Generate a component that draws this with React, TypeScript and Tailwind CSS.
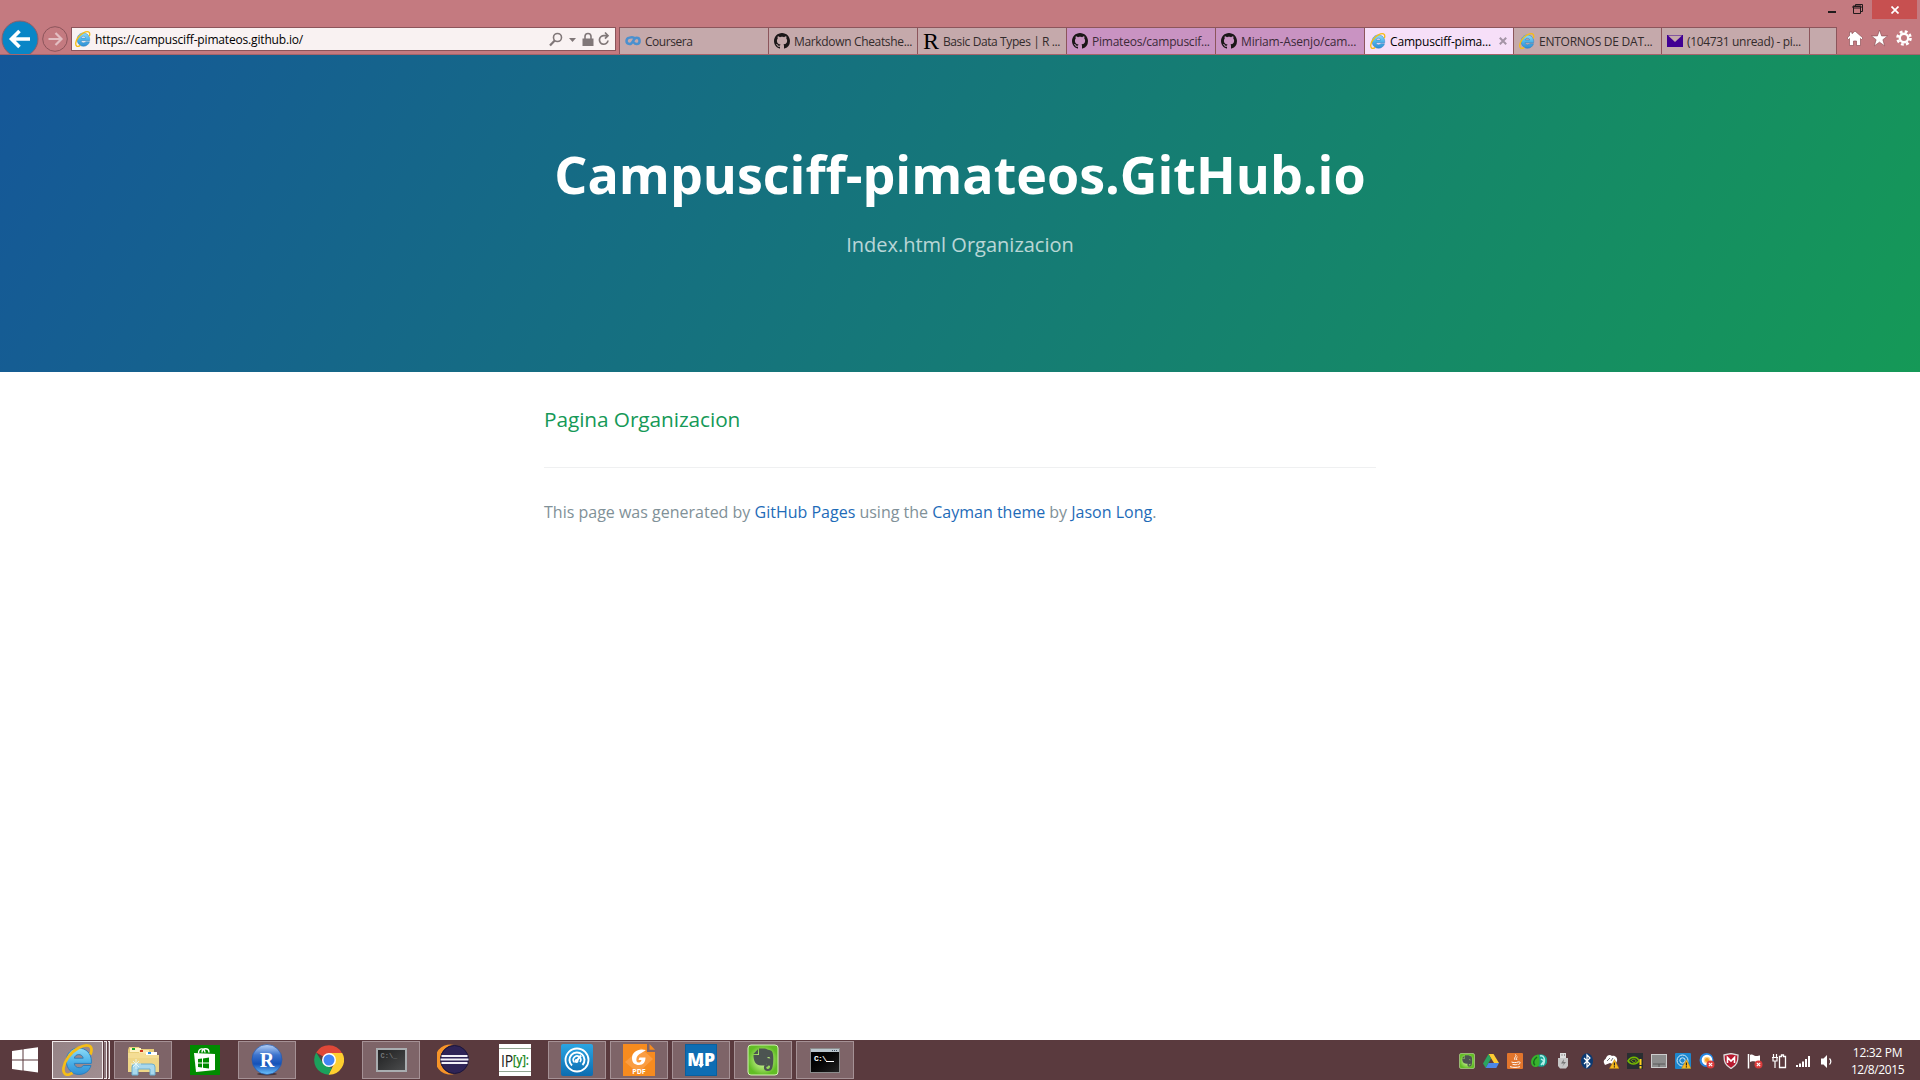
import React from "react";

type P = { className?: string };

function IE({ className = "w-4 h-4" }: P) {
  return (
    <svg viewBox="0 0 32 32" className={className}>
      <defs>
        <linearGradient id="ieb" x1="0" y1="0" x2="0" y2="1">
          <stop offset="0" stopColor="#8fdcf8" />
          <stop offset="0.5" stopColor="#4fb4ea" />
          <stop offset="1" stopColor="#2f8fd4" />
        </linearGradient>
      </defs>
      <path
        d="M16.500 4C9.400 4 4.300 9.700 4.300 17S9.600 30.500 16.800 30.500c5.800 0 10.500-3.200 12.200-9h-7.800c-.9 1.500-2.100 2.200-4 2.200-2.700 0-4.600-1.500-4.900-4.300h17c.1-.7.1-1.600.1-2.300C29.400 9.500 24 4 16.500 4zM12.300 14.200c.6-2.300 2.200-3.600 4.500-3.600s4 1.300 4.400 3.600z"
        fill="url(#ieb)"
        stroke="#2c7fbd"
        strokeWidth="1"
      />
      <path
        d="M28.500 10.500c1.500-4 1.300-7.500-1.500-8.700C22 0 12 5 6 13.500 1 20.500 0 28 3.500 30.300c1.800 1 4.500.2 7-1.500"
        fill="none"
        stroke="#f5bd17"
        strokeWidth="2.700"
      />
    </svg>
  );
}

function GitHub() {
  return (
    <svg viewBox="0 0 16 16" className="h-4 w-4">
      <path
        fill="#1b1718"
        d="M8 0C3.580 0 0 3.580 0 8c0 3.540 2.290 6.530 5.470 7.590.4.070.55-.17.55-.38 0-.19-.01-.82-.01-1.490-2.010.37-2.530-.49-2.690-.94-.09-.23-.48-.94-.82-1.130-.28-.15-.68-.52-.01-.53.63-.01 1.080.58 1.230.82.72 1.210 1.870.87 2.330.66.070-.52.28-.87.51-1.070-1.780-.2-3.640-.89-3.640-3.950 0-.87.31-1.590.82-2.150-.08-.2-.36-1.020.08-2.120 0 0 .67-.21 2.200.82.64-.18 1.320-.27 2-.27s1.360.09 2 .27c1.530-1.040 2.200-.82 2.200-.82.44 1.100.16 1.920.08 2.120.51.56.82 1.270.82 2.150 0 3.070-1.870 3.750-3.650 3.950.29.25.54.73.54 1.480 0 1.070-.01 1.930-.01 2.200 0 .21.15.46.55.38A8.010 8.010 0 0016 8c0-4.420-3.580-8-8-8z"
      />
    </svg>
  );
}

function Coursera() {
  return (
    <svg viewBox="0 0 16 16" className="h-4 w-4">
      <path
        d="M10 5.400C8.700 4 6.500 4 4.500 4.600 0.500 5.500 0.500 10.500 4.500 11.100 8 11.600 8 4.800 11.600 4.800c4 0 4 6.200 0 6.200-1.500 0-2.300-.8-3.200-2"
        fill="none"
        stroke="#4a90cf"
        strokeWidth="2.500"
      />
    </svg>
  );
}

function Mail() {
  return (
    <svg viewBox="0 0 16 16" className="h-4 w-4">
      <rect x="0" y="2" width="16" height="12" fill="#410093" />
      <path d="M1 2.500h14L8 9z" fill="#c5a9ab" />
    </svg>
  );
}

function RLetter() {
  return (
    <span className="flex h-4 w-4 items-center justify-center font-['Liberation_Serif',serif] text-[24px] leading-none text-black">
      R
    </span>
  );
}

function Evernote({ className = "h-8 w-8" }: P) {
  return (
    <svg viewBox="0 0 32 32" className={className}>
      <defs>
        <radialGradient id="evg">
          <stop offset="0.2" stopColor="#d0f598" />
          <stop offset="1" stopColor="#62bd25" />
        </radialGradient>
      </defs>
      <rect x="1" y="1" width="30" height="30" rx="3" fill="url(#evg)" stroke="#d6f3b8" />
      <path
        d="M12 4.500h5.500c2 0 3 1.300 4.700 1.600 2.600.4 3.300 1.500 3.700 4 .7 4 .5 9-.4 13-.8 3.300-2.300 4-4.600 4-2.800 0-4-1.500-4-3.600 0-2.400 1.500-3.600 4.200-3.400v2.300c-1.300 0-1.900.5-1.800 1.400.1.800.8 1.200 1.800 1.200 1.400 0 2-1 2-3.400-2 .7-3-.6-3.600-1.800-1 1.600-3 2-5.400 1.600C9 21 7 18.500 6.500 12.500V11H12z"
        fill="#4c5451"
      />
      <path d="M6.300 10L11 5.300V10z" fill="#4c5451" />
      <path d="M20 14c1-1.300 2.600-1.200 3.400.4z" fill="#b7ea7c" />
    </svg>
  );
}

function Gauge({ className = "h-8 w-8" }: P) {
  return (
    <svg viewBox="0 0 32 32" className={className}>
      <defs>
        <linearGradient id="gg" x1="0" y1="0" x2="0" y2="1">
          <stop offset="0" stopColor="#2ba5e3" />
          <stop offset="1" stopColor="#0d6cb0" />
        </linearGradient>
      </defs>
      <rect width="32" height="32" rx="2" fill="url(#gg)" />
      <g fill="none" stroke="#fff">
        <circle cx="16" cy="16" r="11.500" strokeWidth="1.800" />
        <path d="M11 21.500A7.500 7.500 0 1 1 21.500 21" strokeWidth="2" />
        <path d="M13.500 18.500A3.700 3.700 0 1 1 19 18" strokeWidth="1.600" />
        <path d="M15.500 17L20 11.500" strokeWidth="2" />
      </g>
      <circle cx="15.500" cy="17" r="2" fill="#fff" />
    </svg>
  );
}

function Explorer() {
  return (
    <svg viewBox="0 0 32 32" className="h-8 w-8">
      <path d="M2 3h10l1 2h14v4h3v19H1V6z" fill="#e8cd78" />
      <path d="M3 4h11v4H3z" fill="#fff3c4" />
      <path d="M12 6h10v4H12z" fill="#fbe9ae" />
      <path d="M19 8h11v4H19z" fill="#fff" />
      <rect x="5" y="4" width="3" height="2" fill="#18a52c" />
      <rect x="13" y="6" width="3" height="2" fill="#d2381c" />
      <rect x="21" y="8" width="3" height="2" fill="#2a8de0" />
      <path d="M1 9h16l2 2h13v17H1z" fill="#f4dd94" />
      <path d="M1 14h31v14H1z" fill="#efd687" />
      <path d="M5 31V23q0-3 3-3h17q3 0 3 3v8h-5v-6H11v6z" fill="#a9d8ec" stroke="#6aaed0" />
      <path d="M9 15v10M4 20h10M6 17l6 6M12 17l-6 6" stroke="#e9fbff" strokeWidth=".8" />
    </svg>
  );
}

function Store() {
  return (
    <svg viewBox="0 0 30 30" className="h-[30px] w-[30px]">
      <rect width="30" height="30" fill="#008a00" />
      <path d="M8.500 8.500c0-6 6-6 6.500-1M12 7.500c0-5 7-5 7 0" fill="none" stroke="#fff" strokeWidth="1.400" />
      <path d="M4 8l21 1v16L6 27z" fill="#fff" />
      <path d="M8 14l4-.5v4H8zm5-.6l6-.8v4.900h-6zM8 18.500h4v4L8 22zm5 0h6v5l-6-.8z" fill="#008a00" />
    </svg>
  );
}

function RStudio() {
  return (
    <div className="relative flex h-8 w-8 items-center justify-center">
      <svg viewBox="0 0 32 32" className="absolute inset-0 h-8 w-8">
        <defs>
          <linearGradient id="rs" x1="0" y1="0" x2="0" y2="1">
            <stop offset="0" stopColor="#b9d3f7" />
            <stop offset="0.35" stopColor="#3c73cd" />
            <stop offset="0.65" stopColor="#1451b8" />
            <stop offset="1" stopColor="#6ec6ff" />
          </linearGradient>
        </defs>
        <ellipse cx="16" cy="30" rx="10" ry="1.500" fill="#46353a" />
        <circle cx="16" cy="15.500" r="15" fill="url(#rs)" stroke="#2459ae" strokeWidth=".7" />
      </svg>
      <span className="relative font-['Liberation_Serif',serif] text-[20px] leading-none font-bold text-white">R</span>
    </div>
  );
}

function Chrome() {
  return (
    <svg viewBox="0 0 30 30" className="h-[30px] w-[30px]">
      <path d="M15 15L2.200 7.500A14.700 14.700 0 0 1 27.800 7.700z" fill="#df4838" />
      <path d="M15 8h13.200A14.700 14.700 0 0 1 14.500 29.700L21 17z" fill="#fdce2f" />
      <path d="M2.200 7.500L9.500 19l5.500 3 3 1-3.500 6.700A14.700 14.700 0 0 1 2.200 7.500z" fill="#1ba15c" />
      <circle cx="15" cy="15" r="7" fill="#fff" />
      <circle cx="15" cy="15" r="5.500" fill="#4286f5" />
    </svg>
  );
}

function Terminal() {
  return (
    <div className="flex h-6 w-[31px] border-2 border-[#a9adb0] bg-linear-to-br from-[#202122] to-[#4b4c4d] pt-[3px] pl-[3px] font-['Liberation_Mono',monospace] text-[7px] leading-none font-bold text-[#77797a]">
      C:\_
    </div>
  );
}

function Eclipse() {
  return (
    <svg viewBox="0 0 32 32" className="h-8 w-8">
      <path d="M17 1A15 15 0 1 0 17 30 13.800 14.500 0 0 1 17 1z" fill="#f79428" />
      <circle cx="17.500" cy="15.500" r="14" fill="#2f2457" stroke="#1b153c" />
      <path d="M4.500 12h26M3.500 15.500h28M4.500 19h26" stroke="#f2f0f8" strokeWidth="1.900" />
    </svg>
  );
}

function IPy() {
  return (
    <div className="flex h-8 w-8 items-center justify-center bg-white">
      <div className="flex h-[24px] w-8 items-center justify-center border-y border-[#93a693]">
        <div className="flex scale-x-[0.82] items-center font-['Open_Sans',sans-serif] text-[17px] leading-none tracking-[-0.3px] text-[#222]">
          IP<span className="text-[14px] font-semibold text-[#278a28]">[y]:</span>
        </div>
      </div>
    </div>
  );
}

function Foxit() {
  return (
    <div className="relative h-8 w-8">
      <svg viewBox="0 0 32 32" className="absolute inset-0 h-8 w-8">
        <path d="M0 0h24v8h8v24H0z" fill="#f68b1f" />
        <path d="M26.500 0L32 5.800h-5.500z" fill="#f68b1f" />
        <path d="M2 18L18 4l12 11-15 14z" fill="#fa9d42" />
        <path d="M23 6c-8-2-14 2-14 8 0 5 3 7 7 7 4.500 0 6.500-3 6.500-7.500h-6l-1 2.500h3c-.5 2-1.500 2.500-3 2.500-2 0-2.500-2-2-4C14 10.500 18 9.500 23 6z" fill="#fff" />
      </svg>
      <span className="absolute inset-x-0 bottom-[1px] text-center font-['Open_Sans',sans-serif] text-[7px] leading-[7px] font-bold text-white">PDF</span>
    </div>
  );
}

function MP() {
  return (
    <div className="relative flex h-8 w-8 items-center justify-center border border-[#09609f] bg-[#0e6db3]">
      <span className="font-['Open_Sans',sans-serif] text-[17.500px] leading-none font-extrabold tracking-[-0.3px] text-white">MP</span>
      <svg viewBox="0 0 6 6" className="absolute top-[17px] left-[12px] h-[6px] w-[6px]">
        <path d="M2 0h2v2h2L3 6 0 2h2z" fill="#fff" />
      </svg>
    </div>
  );
}

function Cmd() {
  return (
    <div className="flex h-[25px] w-[30px] flex-col border border-[#8c8c8c] bg-linear-to-br from-black to-[#222]">
      <div className="flex h-[3px] shrink-0 items-center justify-end gap-px bg-[#b9c5cc] pr-0.5">
        <i className="h-px w-px bg-[#456]" />
        <i className="h-px w-px bg-[#456]" />
        <i className="h-px w-px bg-[#456]" />
      </div>
      <div className="flex items-end pt-[3px] pl-[3px] font-['Liberation_Mono',monospace] text-[8px] leading-none font-bold tracking-[-0.8px] text-white">
        C:\<span className="mb-px h-px w-[8px] bg-white" />
      </div>
    </div>
  );
}

function WinLogo() {
  return (
    <svg viewBox="0 0 26 26" className="h-[26px] w-[26px]">
      <path d="M0 4l10.500-1.500v10H0zM11.500 2.300L26 .3v12.200H11.500zM0 13.500h10.500v10L0 22zM11.500 13.500H26v12l-14.500-2z" fill="#fff" />
    </svg>
  );
}

type TabInfo = { label: string; icon: React.ReactNode; w: string; bg: string; sp: string; active?: boolean };

const grey = "bg-[#c5a9ab] text-[#332b2c]";
const purple = "bg-[#c993c2] text-[#3b2a39]";

const tabs: TabInfo[] = [
  { label: "Coursera", icon: <Coursera />, w: "w-[149px]", bg: grey, sp: "tracking-[-0.46px]" },
  { label: "Markdown Cheatshe...", icon: <GitHub />, w: "w-[149px]", bg: grey, sp: "tracking-[-0.34px]" },
  { label: "Basic Data Types | R ...", icon: <RLetter />, w: "w-[149px]", bg: grey, sp: "tracking-[-0.4px]" },
  { label: "Pimateos/campuscif...", icon: <GitHub />, w: "w-[149px]", bg: purple, sp: "tracking-[-0.23px]" },
  { label: "Miriam-Asenjo/cam...", icon: <GitHub />, w: "w-[149px]", bg: purple, sp: "tracking-[-0.16px]" },
  { label: "Campusciff-pima...", icon: <IE />, w: "w-[149px]", bg: "bg-[#f6dff8] text-black", sp: "tracking-[-0.17px]", active: true },
  { label: "ENTORNOS DE DAT...", icon: <IE />, w: "w-[148px]", bg: grey, sp: "tracking-[-0.25px]" },
  { label: "(104731 unread) - pi...", icon: <Mail />, w: "w-[148px]", bg: grey, sp: "tracking-[-0.34px]" },
];

function Tab({ t }: { t: TabInfo }) {
  return (
    <div className={`flex h-[27px] shrink-0 items-center border-t border-l border-[#8c555b] pl-[5px] ${t.w} ${t.bg}`}>
      <span className="shrink-0">{t.icon}</span>
      <span className={`ml-1 pt-0.5 whitespace-nowrap text-[12px] leading-none ${t.sp}`}>{t.label}</span>
      {t.active && (
        <svg viewBox="0 0 8 8" className="mr-1.5 ml-auto h-2 w-2">
          <path d="M.8.8l6.400 6.400M7.200.8L.8 7.200" stroke="#a494a6" strokeWidth="2" />
        </svg>
      )}
    </div>
  );
}

function BrowserBar() {
  return (
    <div className="flex h-[55px] flex-col border-b border-[#a5646b] bg-[#c47a80]">
      <div className="flex h-[19px] shrink-0 justify-end pr-[3px]">
        <svg viewBox="0 0 44 19" className="h-[19px] w-[44px]">
          <path d="M0 11h8v2H0z" fill="#221b1c" />
          <path d="M25.500 6.500h7v7h-7zM25 6h8v2h-8zM27.500 6V4.500h7v7H33" fill="none" stroke="#221b1c" />
        </svg>
        <div className="flex h-[19px] w-[45px] items-center justify-center bg-[#c75050]">
          <svg viewBox="0 0 8 8" className="h-2 w-2">
            <path d="M.5.5l7 7M7.500.5l-7 7" stroke="#fff" strokeWidth="1.700" />
          </svg>
        </div>
      </div>
      <div className="flex h-[35px] shrink-0">
        <svg viewBox="0 0 71 35" className="h-[35px] w-[71px] shrink-0">
          <circle cx="20" cy="20" r="18" fill="#0986c6" stroke="#8c5f6a" />
          <path d="M19.500 12l-8 8 8 8M12.500 20H30" fill="none" stroke="#fff" strokeWidth="3.600" />
          <circle cx="55" cy="20" r="12.300" fill="#c47a80" stroke="#8c555b" />
          <path d="M55.500 14l6 6-6 6M61 20H48.500" fill="none" stroke="#e3bec2" strokeWidth="2.200" />
        </svg>
        <div className="mt-2 flex h-6 w-[545px] shrink-0 items-center border border-[#8c555b] bg-[#f9f2f2] pl-[3px]">
          <IE />
          <span className="ml-[4px] pt-0.5 text-[12px] leading-none tracking-[-0.17px] text-black">https://campusciff-pimateos.github.io/</span>
          <svg viewBox="0 0 64 16" className="mr-[3px] ml-auto h-4 w-[64px]" fill="none" stroke="#807778">
            <circle cx="9.500" cy="6.500" r="4" strokeWidth="1.600" />
            <path d="M6.700 9.500L2 14.500" strokeWidth="2.200" />
            <path d="M21 7h7l-3.500 4z" fill="#807778" stroke="none" />
            <path d="M34.500 7.500h11V15h-11z" fill="#807778" stroke="none" />
            <path d="M37 8V5.500a3 3 0 0 1 6 0V8" strokeWidth="1.600" />
            <path d="M60 9.500a4.300 4.300 0 1 1-3.500-4.800h2.500M57 1.500l3 3.200-3 3" strokeWidth="1.700" />
          </svg>
        </div>
        <div className="mt-2 ml-[3px] flex">
          {tabs.map((t) => (
            <Tab key={t.label} t={t} />
          ))}
          <div className="h-[27px] w-[28px] border-x border-t border-[#8c555b] bg-[#c5a9ab]" />
        </div>
        <svg viewBox="0 0 83 35" className="h-[35px] w-[83px] shrink-0" fill="#fff" stroke="#8f5359" strokeWidth=".7">
          <path d="M18 12l8 7-1.500 1.500-1-1V26.500h-4v-4.500h-3v4.500h-4v-7l-1 1L10 19l2.500-2.200V13h2.500v1.700z" />
          <path d="M42.500 11l2.100 5.900h6.100l-4.800 3.800 1.800 6.200-5.200-3.700-5.200 3.700 1.800-6.200-4.800-3.800h6.100z" />
          <circle cx="67" cy="19" r="6.500" strokeDasharray="2.800 2.300" stroke="#fff" strokeWidth="2.600" fill="none" />
          <circle cx="67" cy="19" r="4.200" fill="none" stroke="#fff" strokeWidth="2.400" />
        </svg>
      </div>
    </div>
  );
}

const apps: { icon: React.ReactNode; open: boolean }[] = [
  { icon: <Explorer />, open: true },
  { icon: <Store />, open: false },
  { icon: <RStudio />, open: true },
  { icon: <Chrome />, open: false },
  { icon: <Terminal />, open: true },
  { icon: <Eclipse />, open: false },
  { icon: <IPy />, open: false },
  { icon: <Gauge />, open: true },
  { icon: <Foxit />, open: true },
  { icon: <MP />, open: true },
  { icon: <Evernote />, open: true },
  { icon: <Cmd />, open: true },
];

const warn = (
  <g>
    <path d="M11.500 6.500l4.500 9H6.500z" fill="#f8b91e" stroke="#b97d10" strokeWidth=".5" />
    <path d="M11.400 9.500v3M11.400 13.300v1.200" stroke="#222" strokeWidth="1.200" />
  </g>
);
const err = (
  <g>
    <circle cx="11.500" cy="11.500" r="4" fill="#dc3b3b" />
    <path d="M9.800 9.800l3.400 3.400M13.200 9.800l-3.400 3.400" stroke="#fff" strokeWidth="1.100" />
  </g>
);

function T({ children }: { children: React.ReactNode }) {
  return (
    <svg viewBox="0 0 16 16" className="h-4 w-4 shrink-0">
      {children}
    </svg>
  );
}

function Tray() {
  return (
    <div className="flex items-center gap-2 pt-0.5">
      <Evernote className="h-4 w-4" />
      <T>
        <path d="M5.500 1h5l5.500 9h-5z" fill="#fbcb32" />
        <path d="M5.500 1L0 10.500 2.700 15 8 5.500z" fill="#2ba45f" />
        <path d="M5.500 10H16l-2.700 5H2.700z" fill="#4b86e8" />
      </T>
      <T>
        <rect width="16" height="16" rx="1" fill="#e2752c" />
        <path d="M8.500 1.500c2 2-2.500 3-.3 5.500M10.500 4c-1.500 1-1.500 1.700-.5 3M4.500 9c2 .8 4.500.8 6.500 0M5.500 11.300c2 .6 3.500.6 5 0M3 13.700c3 .9 7 .9 10 0M11 9c3-.8 2.500 2 .3 2.500" stroke="#fff" fill="none" />
      </T>
      <T>
        <circle cx="10" cy="7.500" r="6.300" fill="#16a392" />
        <path d="M9 3c4-1 6 4 3 9M10 6l3 2-3 4" stroke="#b4efe8" fill="none" strokeWidth="1.500" />
        <path d="M7 1.500C-2 3-1.500 14 4 14s5-5 4-12z" fill="#38b32c" />
        <path d="M6 4c-4 3-4 7-2 8" stroke="#146d1b" fill="none" strokeWidth="1.500" />
      </T>
      <T>
        <rect x="5" y="0" width="6" height="5" fill="#ddd" />
        <path d="M6.500 2h1M9 2h1" stroke="#555" />
        <path d="M3 5h10v8l-2 2.500H5L3 13z" fill="#c6c6c6" />
        <path d="M9 6l-3 4.500h3L7 14l4-5H8.500z" fill="#777" />
      </T>
      <T>
        <ellipse cx="8" cy="8" rx="6" ry="7.700" fill="#0b3a73" />
        <path d="M5 5l6 6-3 3V2l3 3-6 6" fill="none" stroke="#fff" strokeWidth="1.200" />
      </T>
      <T>
        <path d="M1 10c-1-3 2-4 2-5 1-3 4-4 6-2 3-1 6 2 5 5l-2 4-5-2-5 2z" fill="#fff" />
        <path d="M4 8l3-3M8 8l2-3" stroke="#777" />
        {warn}
      </T>
      <T>
        <rect width="16" height="16" fill="#292e31" />
        <path d="M1 8c3-5 9-5 11 0-3 4-8 4-11 0z" fill="none" stroke="#76b900" strokeWidth="1.500" />
        <path d="M4 8c1-3 5-2 5 0s-3 2-4 0" fill="none" stroke="#76b900" />
        <path d="M13.500 6v6M13.500 13v2.500" stroke="#ffd21c" strokeWidth="2" />
      </T>
      <T>
        <rect x=".5" y="1.500" width="15" height="13" fill="#8d8d8d" stroke="#ccc" />
        <path d="M2 11h12M8 11v3" stroke="#5b5b5b" />
      </T>
      <T>
        <rect width="16" height="16" rx="1" fill="#1d86cd" />
        <circle cx="7.500" cy="7.500" r="5.500" fill="none" stroke="#d4ecfa" />
        <circle cx="7.500" cy="7.500" r="2.700" fill="none" stroke="#d4ecfa" />
        {warn}
      </T>
      <T>
        <circle cx="7.500" cy="7" r="7" fill="#2588e6" />
        <circle cx="8" cy="7" r="4.300" fill="#ffd58a" stroke="#fff" strokeWidth="2" />
        <circle cx="8" cy="7" r="2" fill="#f29a24" />
        {err}
      </T>
      <T>
        <path d="M1 2l7-1.500L15 2c0 7-1 10-7 13.500C2 12 1 9 1 2z" fill="#b8192f" stroke="#ddd" strokeWidth="1.300" />
        <path d="M4.500 10V4.500L8 8l3.500-3.500V10" fill="none" stroke="#fff" strokeWidth="1.600" />
      </T>
      <T>
        <path d="M1.500 1v14.500" stroke="#fff" strokeWidth="1.500" />
        <path d="M3 2c3-1.500 4 1.500 6 1 2 0 3-.5 4-.5V9c-3 1-4-.5-6-.8-2-.2-3 .3-4 .8z" fill="#fff" />
        {err}
      </T>
      <T>
        <path d="M2.500 1v3M5.500 1v3M1 4.500h6M2 5v3h4V5M4 8v7" fill="none" stroke="#fff" strokeWidth="1.200" />
        <path d="M8.500 3.500h2V2h2v1.500h2v11h-6z" fill="none" stroke="#fff" strokeWidth="1.300" />
      </T>
      <T>
        <path d="M1 12h2v2H1zM4 10.500h2V14H4zM7 8.500h2V14H7zM10 6h2v8h-2zM13 3h2v11h-2z" fill="#fff" />
      </T>
      <T>
        <path d="M2 5.500h2.500L8 2v13l-3.500-3.500H2z" fill="#fff" />
        <path d="M10.500 5.500c1.800 2 1.800 4 0 6" fill="none" stroke="#fff" strokeWidth="1.200" />
      </T>
    </div>
  );
}

function Taskbar() {
  return (
    <div className="flex h-10 items-center bg-[#5a3a3e]">
      <div className="flex w-[52px] items-center pl-3">
        <WinLogo />
      </div>
      <div className="flex h-[38px] w-[62px] shrink-0">
        <div className="flex w-[51px] items-center justify-center border border-[#f1eaeb] bg-linear-to-br from-[#958386] to-[#a08e91]">
          <IE className="h-8 w-8" />
        </div>
        <div className="ml-px w-[3px] border-y border-r border-[#f1eaeb] bg-[#8b7579]" />
        <div className="ml-px w-[2px] border-y border-r border-[#f1eaeb] bg-[#8b7579]" />
      </div>
      <div className="flex gap-1">
        {apps.map((a, i) => (
          <div
            key={i}
            className={
              a.open
                ? "flex h-[38px] w-[58px] items-center justify-center border border-[#a59195] bg-[#7e6468]"
                : "flex h-[38px] w-[58px] items-center justify-center"
            }
          >
            {a.icon}
          </div>
        ))}
      </div>
      <div className="ml-auto flex items-center">
        <Tray />
        <div className="flex w-[85px] flex-col items-center pt-0.5 text-[12px] leading-[17px] text-white">
          <span className="tracking-[-0.3px]">12:32 PM</span>
          <span className="tracking-[-0.4px]">12/8/2015</span>
        </div>
      </div>
    </div>
  );
}

export default function App() {
  return (
    <div className="flex h-[1080px] w-[1920px] flex-col overflow-hidden bg-white font-['Open_Sans','Noto_Sans',sans-serif]">
      <BrowserBar />
      <header className="flex h-[317px] shrink-0 flex-col items-center bg-[linear-gradient(120deg,#155799,#159957)] text-white">
        <h1 className="mt-[80px] text-[52px] leading-[78px] font-bold">Campusciff-pimateos.GitHub.io</h1>
        <h2 className="mt-[17px] text-[20px] leading-[30px] font-normal opacity-70">Index.html Organizacion</h2>
      </header>
      <main className="mx-auto w-[832px] grow">
        <h3 className="mt-[31px] text-[20.800px] leading-[32px] tracking-[-0.07px] text-[#159957]">Pagina Organizacion</h3>
        <footer className="mt-[32px] border-t border-[#eff0f1] pt-[32px] text-[16px] leading-6 text-[#819198]">
          This page was generated by <a className="text-[#1e6bb8]">GitHub Pages</a> using the{" "}
          <a className="text-[#1e6bb8]">Cayman theme</a> by <a className="text-[#1e6bb8]">Jason Long</a>.
        </footer>
      </main>
      <Taskbar />
    </div>
  );
}
